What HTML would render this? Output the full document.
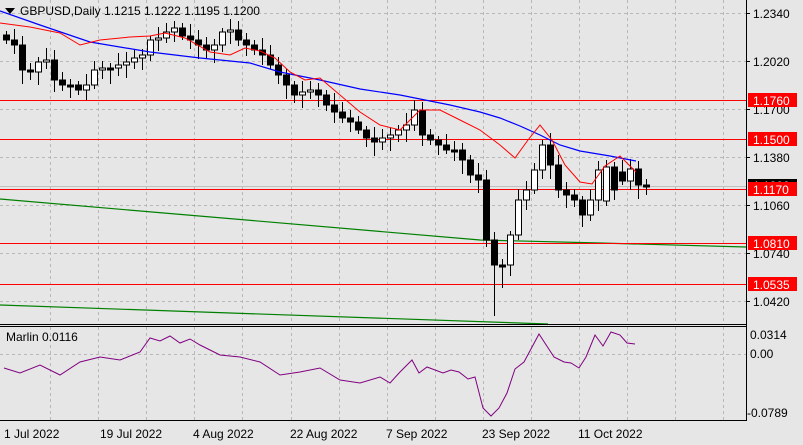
<!DOCTYPE html>
<html><head><meta charset="utf-8"><style>
html,body{margin:0;padding:0;background:#e6e6e6;}
svg{display:block;font-family:"Liberation Sans",Tahoma,sans-serif;}
</style></head><body>
<svg id="s" width="803" height="445" viewBox="0 0 803 445" xmlns="http://www.w3.org/2000/svg">
<rect width="803" height="445" fill="#e6e6e6"/>
<g id="grid" stroke="#b8b8b8" stroke-dasharray="3,3" stroke-width="1"></g>
<g id="cand"></g>
<g id="ind"></g>
<g stroke="#000" stroke-width="1" fill="none">
<line x1="746.5" y1="0" x2="746.5" y2="421"/>
<line x1="0" y1="324.5" x2="747" y2="324.5"/>
<line x1="0" y1="326.5" x2="747" y2="326.5"/>
<line x1="0" y1="420.5" x2="747" y2="420.5"/>
</g>
<g id="axis" font-size="12" fill="#000"></g>
<g font-size="12">
<polygon points="5,8 15,8 10,14" fill="#000"/>
<text x="20" y="15">GBPUSD,Daily  1.1215 1.1222 1.1195 1.1200</text>
<text x="6" y="341">Marlin 0.0116</text>
<text x="4" y="438">1 Jul 2022</text>
<text x="100" y="438">19 Jul 2022</text>
<text x="193" y="438">4 Aug 2022</text>
<text x="290" y="438">22 Aug 2022</text>
<text x="386" y="438">7 Sep 2022</text>
<text x="482" y="438">23 Sep 2022</text>
<text x="578" y="438">11 Oct 2022</text>
</g>
</svg>
<script>
(function(){
function Y(p){return 13+(1.2340-p)*1500;}
var g=document.getElementById('grid'),h='';
for(var x=50;x<746;x+=48.1){var xx=Math.round(x)+.5;h+='<line x1="'+xx+'" y1="0" x2="'+xx+'" y2="324"/><line x1="'+xx+'" y1="327" x2="'+xx+'" y2="420"/>';}
for(var y=13;y<=301;y+=48){h+='<line x1="0" y1="'+(y+.5)+'" x2="746" y2="'+(y+.5)+'"/>';}
h+='<line x1="0" y1="354.5" x2="746" y2="354.5"/>';
g.innerHTML=h;
var L='';
L+='<polyline points="0,199 480,240 600,243 746,247" stroke="#008000" fill="none" stroke-width="1.2"/>';
L+='<polyline points="0,305 548,324" stroke="#008000" fill="none" stroke-width="1.2"/>';
L+='<line x1="0" y1="186.5" x2="746" y2="186.5" stroke="#c0c0c0"/>';
[1.1760,1.1500,1.1170,1.0810,1.0535].forEach(function(p){var y=Math.round(Y(p));L+='<rect x="0" y="'+y+'" width="746" height="1" fill="#ff0000"/>';});
var cy=[40,45,70,72,62,60,80,85,85,90,85,70,68,68,65,62,58,55,40,38,32,28,36,40,45,50,45,32,30,40,45,50,55,65,75,85,95,92,90,95,105,112,118,122,130,138,142,138,135,130,125,110,135,140,145,150,150,160,175,180,240,265,265,235,200,190,170,145,165,190,195,200,215,200,170,167,190,181,169,185,186];
var c='',prev=35;
for(var i=0;i<cy.length;i++){var x=6+8*i,o=prev,cc=cy[i];if(i==75){o=201;}if(i==77){o=172;}
var t=Math.min(o,cc),b=Math.max(o,cc);if(b-t<2)b=t+2;
var hi=t-4-((i*7)%9),lo=b+4+((i*5)%11);if(i==61)lo=316;if(i==62)lo=288;
c+='<line x1="'+(x+.5)+'" y1="'+hi+'" x2="'+(x+.5)+'" y2="'+lo+'" stroke="#000"/>';
c+='<rect x="'+(x-2.5)+'" y="'+t+'" width="6" height="'+(b-t)+'" fill="'+(cc<o?'#fff':'#000')+'" stroke="#000"/>';
prev=cc;}
var blue='0,11 40,25 90,42 150,52 200,58 250,63 280,72 320,80 360,89 400,95 450,105 480,112 500,118 520,126 540,135 560,145 580,151 610,156 636,161';
var red='0,23 30,27 60,33 80,45 100,40 130,37 150,36 165,33 185,38 210,52 230,55 245,48 260,51 275,58 290,72 305,80 320,78 340,95 360,112 380,125 400,130 420,110 440,110 460,120 480,130 500,145 515,158 528,140 540,125 552,140 565,165 580,182 592,184 605,166 620,156 636,172';
c+='<polyline points="'+blue+'" stroke="#0000ff" fill="none" stroke-width="1.2"/>';
c+='<polyline points="'+red+'" stroke="#ff0000" fill="none" stroke-width="1"/>';
document.getElementById('cand').innerHTML=L+c;
var ip='4,368 20,373 40,365 60,375 80,362 100,357 120,360 140,352 150,338 160,341 170,336 180,343 190,339 200,345 210,350 220,355 240,357 260,362 280,375 300,372 320,368 340,380 360,383 380,377 390,383 400,372 412,360 419,373 427,367 443,373 451,370 459,372 468,379 475,377 483,408 491,416 499,408 507,393 515,369 524,362 539,334 554,357 564,362 571,363 579,368 586,357 595,335 603,346 611,332 620,335 627,343 635,344';
document.getElementById('ind').innerHTML='<polyline points="'+ip+'" stroke="#800080" fill="none" stroke-width="1"/>';
var a='';
[[1.2340,13],[1.2020,61],[1.1700,109],[1.1380,157],[1.1060,205],[1.0740,253],[1.0420,301]].forEach(function(q){a+='<line x1="746" y1="'+(q[1]+.5)+'" x2="750" y2="'+(q[1]+.5)+'" stroke="#000"/><text x="753" y="'+(q[1]+5)+'">'+q[0].toFixed(4)+'</text>';});
a+='<text x="750" y="339">0.0314</text><text x="750" y="358">0.00</text><text x="747" y="417">-0.0789</text>';
a+='<rect x="748" y="179" width="49" height="14" fill="#000"/><text x="753" y="190" fill="#fff">1.1200</text>';
[1.1760,1.1500,1.1170,1.0810,1.0535].forEach(function(p){var y=Math.round(Y(p));a+='<rect x="748" y="'+(y-7)+'" width="49" height="14" fill="#ff0000"/><text x="753" y="'+(y+5)+'" fill="#fff">'+p.toFixed(4)+'</text>';});
document.getElementById('axis').innerHTML=a;
})();
</script>
</body></html>
